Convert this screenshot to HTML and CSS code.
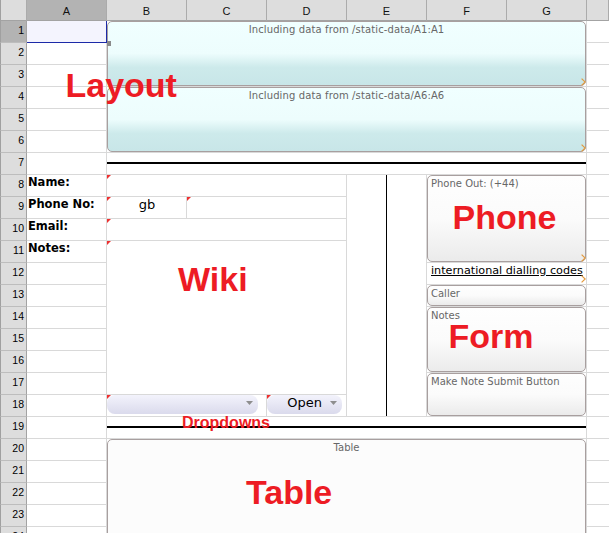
FILE: index.html
```html
<!DOCTYPE html>
<html>
<head>
<meta charset="utf-8">
<title>Sheet</title>
<link rel="stylesheet" href="styles.css">
</head>
<body>
<div class="sheet">
  <div class="colhead">
    <div class="ch corner"></div>
    <div class="ch sel">A</div>
    <div class="ch">B</div>
    <div class="ch">C</div>
    <div class="ch">D</div>
    <div class="ch">E</div>
    <div class="ch">F</div>
    <div class="ch">G</div>
    <div class="ch"></div>
  </div>
  <div class="rowhead">
    <div class="rh sel">1</div>
    <div class="rh">2</div>
    <div class="rh">3</div>
    <div class="rh">4</div>
    <div class="rh">5</div>
    <div class="rh">6</div>
    <div class="rh">7</div>
    <div class="rh">8</div>
    <div class="rh">9</div>
    <div class="rh">10</div>
    <div class="rh">11</div>
    <div class="rh">12</div>
    <div class="rh">13</div>
    <div class="rh">14</div>
    <div class="rh">15</div>
    <div class="rh">16</div>
    <div class="rh">17</div>
    <div class="rh">18</div>
    <div class="rh">19</div>
    <div class="rh">20</div>
    <div class="rh">21</div>
    <div class="rh">22</div>
    <div class="rh">23</div>
    <div class="rh">24</div>
  </div>

  <div class="a1"><span class="handle"></span></div>

  <div class="w layout lay1">Including data from /static-data/A1:A1
    <svg class="chev" viewBox="0 0 5 8"><polyline points="0.6,0.6 4.2,4 0.6,7.4" fill="none" stroke="#e39a3c" stroke-width="1.2"/></svg>
  </div>
  <div class="w layout lay2">Including data from /static-data/A6:A6
    <svg class="chev" viewBox="0 0 5 8"><polyline points="0.6,0.6 4.2,4 0.6,7.4" fill="none" stroke="#e39a3c" stroke-width="1.2"/></svg>
  </div>

  <div class="m hcell rule7"><div class="hline"></div></div>

  <div class="lbl l8">Name:</div>
  <div class="lbl l9">Phone No:</div>
  <div class="lbl l10">Email:</div>
  <div class="lbl l11">Notes:</div>

  <div class="m note name-in"></div>
  <div class="note gb">gb</div>
  <div class="m note phone-in"></div>
  <div class="m note email-in"></div>
  <div class="m note notes-in"></div>

  <div class="m note dd1cell">
    <div class="dd dd1"><svg class="arrow" viewBox="0 0 7 4"><polygon points="0,0 7,0 3.5,4" fill="#8e8e8e"/></svg></div>
  </div>
  <div class="m note dd2cell">
    <div class="dd dd2"><span>Open</span><svg class="arrow" viewBox="0 0 7 4"><polygon points="0,0 7,0 3.5,4" fill="#8e8e8e"/></svg></div>
  </div>

  <div class="m divider"><div class="vline"></div></div>

  <div class="w form phone">Phone Out: (+44)
    <svg class="chev" viewBox="0 0 5 8"><polyline points="0.6,0.6 4.2,4 0.6,7.4" fill="none" stroke="#e39a3c" stroke-width="1.2"/></svg>
  </div>
  <div class="m link"><span class="linktext">international dialling codes</span>
    <svg class="chev chev-link" viewBox="0 0 5 8"><polyline points="0.6,0.6 4.2,4 0.6,7.4" fill="none" stroke="#e39a3c" stroke-width="1.2"/></svg>
  </div>
  <div class="w form caller">Caller</div>
  <div class="w form notes">Notes</div>
  <div class="w form submit">Make Note Submit Button</div>

  <div class="m hcell rule19"><div class="hline"></div></div>

  <div class="w table">Table</div>

  <div class="big big-layout">Layout</div>
  <div class="big big-phone">Phone</div>
  <div class="big big-wiki">Wiki</div>
  <div class="big big-form">Form</div>
  <div class="big big-table">Table</div>
  <div class="big big-dd">Dropdowns</div>
</div>
</body>
</html>
```

FILE: styles.css
```css
* { box-sizing: border-box; }

body {
  margin: 0;
  background: #fff;
  font-family: "DejaVu Sans", Verdana, sans-serif;
  color: #000;
}

.sheet {
  position: relative;
  width: 609px;
  height: 533px;
  overflow: hidden;
  display: grid;
  grid-template-columns: 27px repeat(7, 80px) 22px;
  grid-template-rows: 21px repeat(24, 22px);
  background-color: #fff;
  background-image:
    repeating-linear-gradient(to right, transparent 0 79px, #d9d9d9 79px 80px),
    repeating-linear-gradient(to bottom, transparent 0 21px, #d9d9d9 21px 22px);
  background-position: 27px 0, 0 21px;
}

/* headers */
.colhead {
  grid-column: 1 / -1;
  grid-row: 1;
  display: grid;
  grid-template-columns: 27px repeat(7, 80px) 1fr;
}
.ch {
  background: #dddddd;
  border-right: 1px solid #ababab;
  border-bottom: 1px solid #a3a3a3;
  font: 11px/12px "Liberation Sans", Arial, sans-serif;
  text-align: center;
  padding-top: 5px;
  color: #111;
}
.ch.corner { border-left: 1px solid #a0a0a0; }
.ch.sel { background: #b3b3b3; }

.rowhead {
  grid-column: 1;
  grid-row: 2 / 26;
  display: flex;
  flex-direction: column;
}
.rh {
  flex: none;
  height: 22px;
  background: #dddddd;
  border-left: 1px solid #a0a0a0;
  border-right: 1px solid #a3a3a3;
  border-bottom: 1px solid #bdbdbd;
  font: 10.5px/12px "Liberation Sans", Arial, sans-serif;
  text-align: right;
  padding: 3px 2px 0 0;
  color: #000;
}
.rh.sel { background: #b3b3b3; }

/* selected cell */
.a1 {
  grid-column: 2;
  grid-row: 2;
  position: relative;
  background: #f4f4fe;
  border-right: 1px solid #1c2aa8;
  border-bottom: 1px solid #1c2aa8;
}
.handle {
  position: absolute;
  left: 80px;
  top: 20px;
  width: 4px;
  height: 5px;
  background: #8a8a8a;
  z-index: 3;
}

/* merged cells */
.m {
  position: relative;
  background: #fff;
  margin: 0 1px 1px 0;
}
.note { position: relative; }
.note::before {
  content: "";
  position: absolute;
  left: 0;
  top: 0;
  border-top: 4px solid #ee3030;
  border-right: 4px solid transparent;
  z-index: 2;
}

.hcell { padding-top: 9px; }
.hline { height: 2px; background: #000; }

.divider { display: flex; }
.vline { width: 1px; margin-left: 39px; background: #000; }

/* widgets */
.w {
  position: relative;
  margin: 0 1px 1px 0;
  border: 1px solid #a89f9f;
  border-radius: 5px;
  padding: 2px 3px;
  font-size: 10px;
  line-height: 12px;
  color: #676767;
  white-space: nowrap;
}
.layout {
  text-align: center;
  letter-spacing: 0.12px;
  background: linear-gradient(#f0ffff 0%, #edfdfd 50%, #cdeaeb 72%, #c8e6e8 100%);
}
.form {
  background: linear-gradient(#fefefe 0%, #fbfbfb 50%, #ebebeb 100%);
}
.table {
  text-align: center;
  background: #fcfcfc;
}
.chev {
  position: absolute;
  right: -1px;
  bottom: -1px;
  width: 5px;
  height: 8px;
}

/* placement */
.lay1 { grid-column: 3 / 9; grid-row: 2 / 5; }
.lay2 { grid-column: 3 / 9; grid-row: 5 / 8; }
.rule7 { grid-column: 3 / 9; grid-row: 8; }
.l8 { grid-column: 2; grid-row: 9; }
.l9 { grid-column: 2; grid-row: 10; }
.l10 { grid-column: 2; grid-row: 11; }
.l11 { grid-column: 2; grid-row: 12; }
.name-in { grid-column: 3 / 6; grid-row: 9; }
.gb { grid-column: 3; grid-row: 10; }
.phone-in { grid-column: 4 / 6; grid-row: 10; }
.email-in { grid-column: 3 / 6; grid-row: 11; }
.notes-in { grid-column: 3 / 6; grid-row: 12 / 19; }
.dd1cell { grid-column: 3 / 5; grid-row: 19; }
.dd2cell { grid-column: 5; grid-row: 19; }
.divider { grid-column: 6; grid-row: 9 / 20; }
.phone { grid-column: 7 / 9; grid-row: 9 / 13; }
.link { grid-column: 7 / 9; grid-row: 13; }
.caller { grid-column: 7 / 9; grid-row: 14; }
.notes { grid-column: 7 / 9; grid-row: 15 / 18; }
.submit { grid-column: 7 / 9; grid-row: 18 / 20; }
.rule19 { grid-column: 3 / 9; grid-row: 20; }
.table { grid-column: 3 / 9; grid-row: 21 / 26; }

/* labels in column A */
.lbl {
  font-weight: bold;
  font-size: 11.5px;
  line-height: 13px;
  padding: 1px 0 0 1px;
  white-space: nowrap;
}

.gb {
  text-align: center;
  font-size: 13px;
  line-height: 15px;
}

/* dropdowns */
.dd {
  height: 19px;
  border-radius: 8px;
  background: linear-gradient(#f3f3fc, #dadaec);
  display: flex;
  justify-content: flex-end;
  align-items: flex-start;
  gap: 8px;
  padding-right: 5px;
  font-size: 13px;
  line-height: 15px;
  color: #000;
}
.dd1 { width: 151px; }
.dd2 { width: 75px; }
.dd .arrow {
  width: 7px;
  height: 4px;
  margin-top: 6px;
  flex: none;
}

/* link */
.link {
  padding: 1px 0 0 4px;
  font-size: 11.2px;
  line-height: 13px;
  white-space: nowrap;
}
.linktext { text-decoration: underline; }
.chev-link { right: 0; bottom: 1px; }

/* big red annotations */
.big {
  position: absolute;
  z-index: 5;
  font: bold 34px/26px "Liberation Sans", Arial, sans-serif;
  color: #ed1c24;
  white-space: nowrap;
}
.big-layout { left: 65.5px; top: 71.5px; }
.big-phone { left: 452.5px; top: 203.5px; }
.big-wiki { left: 178px; top: 265.5px; }
.big-form { left: 448.5px; top: 322.5px; }
.big-table { left: 246px; top: 478.5px; }
.big-dd { left: 182px; top: 414.6px; font-size: 16px; line-height: 16px; }
```
